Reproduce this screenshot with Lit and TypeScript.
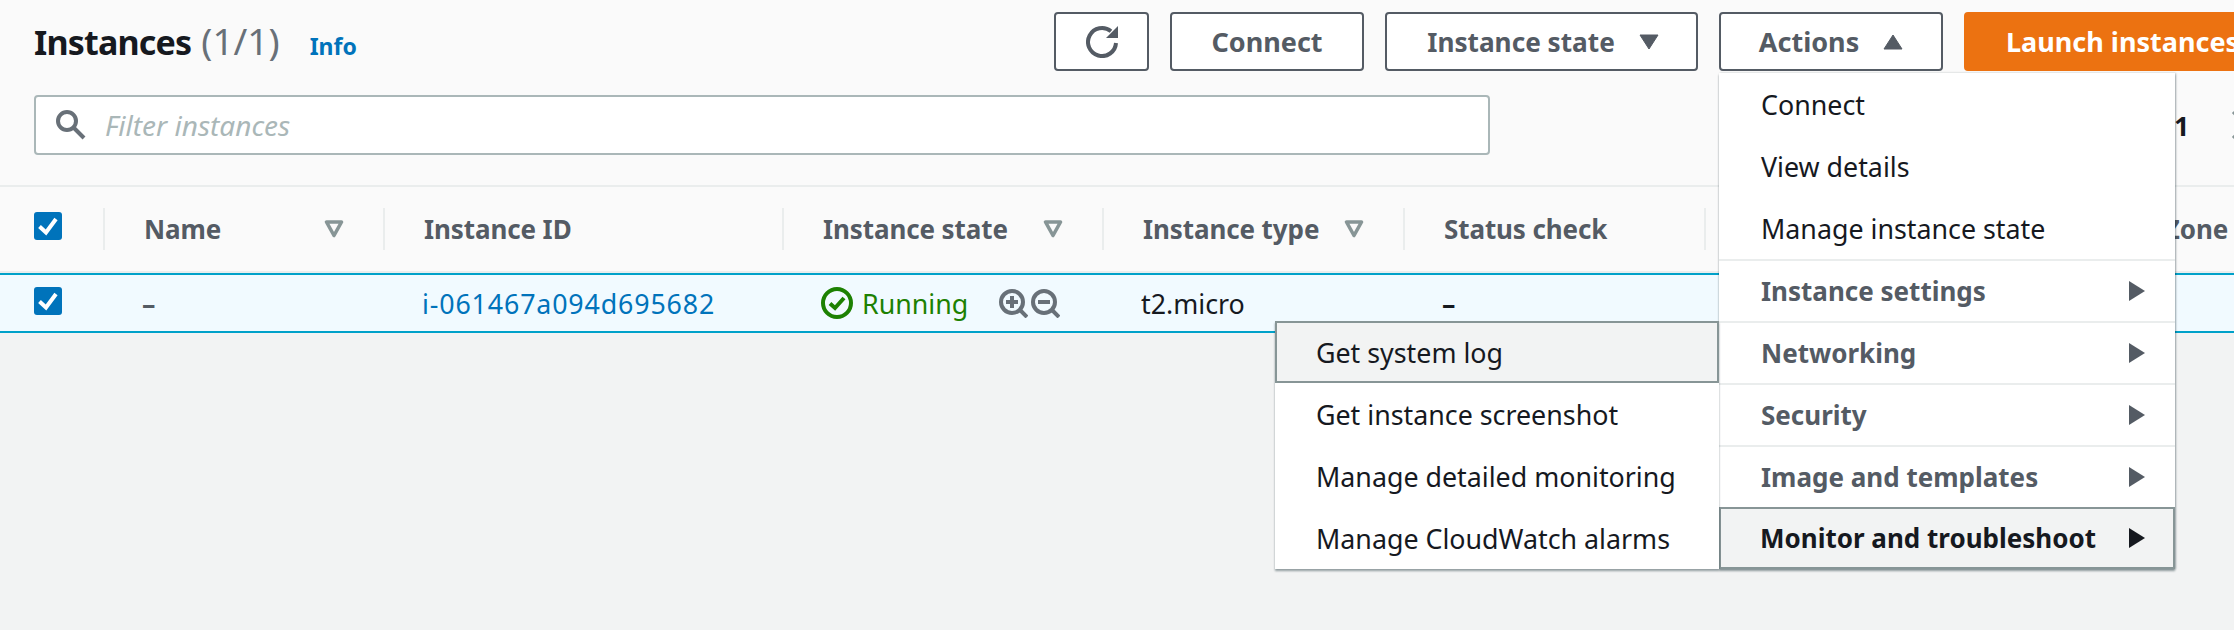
import { css, html, LitElement, svg } from "lit";
import { customElement } from "lit/decorators.js";

const caret = (up: boolean) => html`
  <svg class="caret" viewBox="0 0 20 16">
    <path d=${up ? "M10 1 19 15H1Z" : "M1 1H19L10 15Z"} fill="currentColor" stroke="currentColor" stroke-width="1" stroke-linejoin="round" />
  </svg>
`;

const filterIcon = html`
  <svg class="filter" viewBox="0 0 20 18">
    <path d="M2.5 2H17.5L10 15.5Z" fill="none" stroke="#879596" stroke-width="3.6" stroke-linejoin="round" />
  </svg>
`;

const checkbox = html`
  <svg class="check" viewBox="0 0 28 28">
    <rect width="28" height="28" rx="3" fill="#0073bb" />
    <path d="M5.5 14.5 12 20.5 22 7" fill="none" stroke="#fff" stroke-width="4" />
  </svg>
`;

const magnifier = (plus: boolean) => html`
  <svg class="zoom" viewBox="0 0 29 29">
    <circle cx="13" cy="13" r="11" fill="none" stroke="#687078" stroke-width="4" />
    <path d="M21 21 28 28" stroke="#687078" stroke-width="4" />
    ${svg`<path d=${plus ? "M7 13H19M13 7V19" : "M7 13H19"} stroke="#687078" stroke-width="4" />`}
  </svg>
`;

@customElement("app-root")
export class AppRoot extends LitElement {
  render() {
    const submenu = ["Get system log", "Get instance screenshot", "Manage detailed monitoring", "Manage CloudWatch alarms"];
    const groups = ["Instance settings", "Networking", "Security", "Image and templates"];

    return html`
      <header>
        <div class="top">
          <h1><span class="title">Instances</span><span class="count">(1/1)</span><a class="info">Info</a></h1>
          <div class="actions">
            <button class="icon-btn">
              <svg viewBox="0 0 32 32" width="32" height="32">
                <path d="M25 5.3A14 14 0 1 0 30 17" fill="none" stroke="#545b64" stroke-width="4" />
                <path d="M32 0V12H20Z" fill="#545b64" />
              </svg>
            </button>
            <button class="connect">Connect</button>
            <button class="state">Instance state ${caret(false)}</button>
            <div class="actions-wrap">
              <button class="actions-btn">Actions ${caret(true)}</button>
              <div class="menu">
                <div class="item">Connect</div>
                <div class="item">View details</div>
                <div class="item">Manage instance state</div>
                ${groups.map((g) => html`<div class="item group"><span>${g}</span><span class="arrow"></span></div>`)}
                <div class="item group active"><span>Monitor and troubleshoot</span><span class="arrow"></span></div>
                <div class="submenu">
                  ${submenu.map((s, i) => html`<div class="item ${i === 0 ? "active" : ""}">${s}</div>`)}
                </div>
              </div>
            </div>
            <button class="primary">Launch instances</button>
          </div>
        </div>
        <div class="search-row">
          <div class="search">
            <svg viewBox="0 0 30 30" width="30" height="30">
              <circle cx="11" cy="11" r="9" fill="none" stroke="#687078" stroke-width="4" />
              <path d="M17.5 17.5 28 28" stroke="#687078" stroke-width="4" />
            </svg>
            <span>Filter instances</span>
          </div>
          <div class="pager">
            <span>1</span>
            <svg viewBox="0 0 16 30" width="16" height="30">
              <path d="M2 2 14 15 2 28" fill="none" stroke="#879596" stroke-width="3" />
            </svg>
          </div>
        </div>
      </header>
      <div class="thead">
        <div class="th first">${checkbox}</div>
        <div class="th"><span>Name</span>${filterIcon}</div>
        <div class="th"><span>Instance ID</span></div>
        <div class="th"><span>Instance state</span>${filterIcon}</div>
        <div class="th"><span>Instance type</span>${filterIcon}</div>
        <div class="th"><span>Status check</span></div>
        <div class="th"></div>
        <div class="th last"><span>Availability Zone</span></div>
      </div>
      <div class="row">
        <div class="td first">${checkbox}</div>
        <div class="td dash muted">–</div>
        <div class="td"><a>i-061467a094d695682</a></div>
        <div class="td running">
          <svg viewBox="0 0 32 32" width="32" height="32">
            <circle cx="16" cy="16" r="14" fill="none" stroke="#1d8102" stroke-width="4" />
            <path d="M9 16.5 14 21 23 11" fill="none" stroke="#1d8102" stroke-width="4" />
          </svg>
          <span>Running</span>
          <span class="zooms">${magnifier(true)}${magnifier(false)}</span>
        </div>
        <div class="td">t2.micro</div>
        <div class="td dash">–</div>
      </div>
    `;
  }

  static styles = css`
    :host {
      display: block;
      height: 630px;
      overflow: hidden;
      background: #f2f3f3;
      color: #16191f;
      font-family: "Noto Sans", sans-serif;
      font-size: 26.8px;
    }

    header {
      box-sizing: border-box;
      height: 187px;
      background: #fafafa;
      border-bottom: 2px solid #eaeded;
      padding: 12px 0 0 34px;
    }

    .top {
      display: grid;
      grid-template-columns: 1020px auto;
      height: 59px;
    }

    h1 {
      margin: 0;
      height: 59px;
      display: flex;
      align-items: baseline;
      font-size: 34px;
      font-weight: 700;
      line-height: 58px;
      white-space: nowrap;
    }

    .title {
      letter-spacing: -0.8px;
    }

    .count {
      margin-left: 10px;
      font-size: 37px;
      font-weight: 400;
      color: #687078;
    }

    .info {
      margin-left: 30px;
      font-size: 23px;
      font-weight: 700;
      color: #0073bb;
      letter-spacing: 0;
    }

    .actions {
      display: flex;
      gap: 21px;
    }

    button {
      box-sizing: border-box;
      height: 59px;
      flex: none;
      border: 2px solid #545b64;
      border-radius: 4px;
      background: #fff;
      color: #545b64;
      font: 700 27px "Noto Sans", sans-serif;
      display: flex;
      align-items: center;
      justify-content: center;
      padding: 0;
    }

    .icon-btn {
      width: 95px;
    }

    .connect {
      width: 194px;
    }

    .state {
      width: 313px;
      gap: 24px;
      padding-left: 3px;
      font-size: 26.2px;
    }

    .actions-btn {
      width: 224px;
      gap: 24px;
    }

    .caret {
      width: 20px;
      height: 16px;
    }

    .primary {
      width: 300px;
      justify-content: flex-start;
      padding-left: 40px;
      background: #ec7211;
      border-color: #ec7211;
      color: #fff;
    }

    .actions-wrap {
      position: relative;
    }

    .menu {
      position: absolute;
      top: 61px;
      left: 0;
      width: 456px;
      background: #fff;
      box-shadow: 0 2px 2px rgba(0, 28, 36, 0.4), 1px 0 2px rgba(0, 28, 36, 0.25);
      z-index: 2;
    }

    .item {
      box-sizing: border-box;
      height: 62px;
      padding: 0 42px;
      display: flex;
      align-items: center;
      justify-content: space-between;
      white-space: nowrap;
    }

    .group {
      border-top: 2px solid #eaeded;
      color: #545b64;
      font-size: 26px;
      font-weight: 700;
      padding-right: 30px;
    }

    .arrow {
      border-left: 16px solid currentColor;
      border-top: 10px solid transparent;
      border-bottom: 10px solid transparent;
    }

    .item.active {
      background: #f2f3f3;
      border: 2px solid #879596;
      color: #16191f;
      padding-left: 39px;
      padding-right: 28px;
    }

    .submenu {
      position: absolute;
      right: 100%;
      bottom: 0;
      width: 444px;
      background: #fff;
      box-shadow: 0 2px 2px rgba(0, 28, 36, 0.4);
    }

    .submenu .item {
      padding-left: 41px;
    }

    .submenu .item.active {
      padding-left: 39px;
    }

    .search-row {
      display: flex;
      margin-top: 24px;
    }

    .search {
      box-sizing: border-box;
      flex: none;
      width: 1456px;
      height: 60px;
      background: #fff;
      border: 2px solid #aab7b8;
      border-radius: 4px;
      display: flex;
      align-items: center;
      gap: 19px;
      padding-left: 20px;
    }

    .search span {
      color: #aab7b8;
      font-size: 28px;
      font-style: italic;
    }

    .pager {
      display: flex;
      flex: none;
      align-items: center;
      gap: 42px;
      margin-left: 684px;
      font-weight: 700;
      height: 60px;
    }

    .thead,
    .row {
      display: grid;
      grid-template-columns: 103px 280px 399px 320px 301px 301px 290px 240px;
      white-space: nowrap;
    }

    .thead {
      height: 84px;
      background: #fafafa;
      border-bottom: 2px solid #eaeded;
      align-items: center;
      color: #545b64;
      font-size: 26px;
      font-weight: 700;
      letter-spacing: -0.1px;
    }

    .th {
      box-sizing: border-box;
      height: 42px;
      padding: 0 39px;
      border-left: 2px solid #eaeded;
      display: flex;
      align-items: center;
      justify-content: space-between;
    }

    .th.first {
      border-left: none;
      padding: 0 0 6px 34px;
    }

    .td.first {
      padding: 0 0 4px 34px;
    }

    .th.last {
      padding: 0 0 0 18px;
    }

    .check {
      width: 28px;
      height: 28px;
    }

    .filter {
      width: 20px;
      height: 18px;
    }

    .row {
      height: 56px;
      background: #f1faff;
      border-top: 2px solid #00a1c9;
      border-bottom: 2px solid #00a1c9;
      align-items: center;
    }

    .td {
      padding-left: 39px;
      display: flex;
      align-items: center;
    }

    .dash {
      font-weight: 700;
    }

    .muted {
      color: #545b64;
    }

    .td a {
      color: #0073bb;
      letter-spacing: 0.85px;
    }

    .running {
      color: #1d8102;
      gap: 9px;
    }

    .zooms {
      display: flex;
      gap: 3px;
      margin-left: 22px;
    }

    .zoom {
      width: 29px;
      height: 29px;
    }
  `;
}
